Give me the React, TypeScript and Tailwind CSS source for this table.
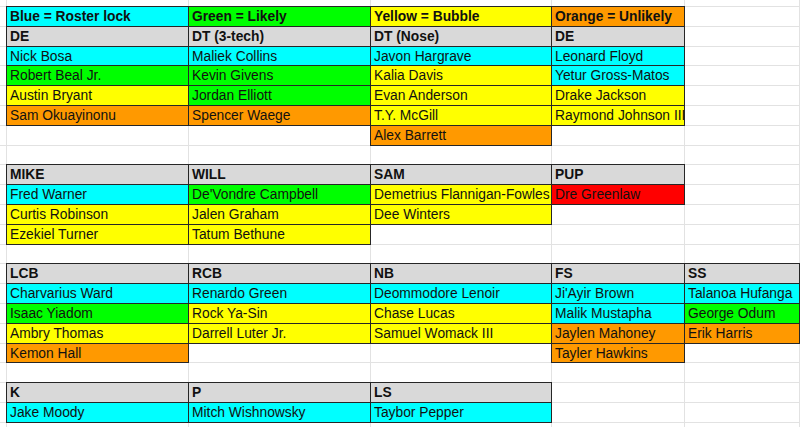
type Kind = "b" | "g" | "y" | "o" | "r" | "h" | "lb" | "lg" | "ly" | "lo";
type Cell = [string, Kind] | null;

const fills: Record<Kind, string> = {
  b: "bg-[#00ffff]",
  g: "bg-[#00ff00]",
  y: "bg-[#ffff00]",
  o: "bg-[#ff9900]",
  r: "bg-[#ff0000]",
  h: "bg-[#d9d9d9] font-bold",
  lb: "bg-[#00ffff] font-bold",
  lg: "bg-[#00ff00] font-bold",
  ly: "bg-[#ffff00] font-bold",
  lo: "bg-[#ff9900] font-bold",
};

// columns B..F, one entry per sheet row
const rows: Cell[][] = [
  [["Blue = Roster lock", "lb"], ["Green = Likely", "lg"], ["Yellow = Bubble", "ly"], ["Orange = Unlikely", "lo"], null],
  [["DE", "h"], ["DT (3-tech)", "h"], ["DT (Nose)", "h"], ["DE", "h"], null],
  [["Nick Bosa", "b"], ["Maliek Collins", "b"], ["Javon Hargrave", "b"], ["Leonard Floyd", "b"], null],
  [["Robert Beal Jr.", "g"], ["Kevin Givens", "g"], ["Kalia Davis", "y"], ["Yetur Gross-Matos", "b"], null],
  [["Austin Bryant", "y"], ["Jordan Elliott", "g"], ["Evan Anderson", "y"], ["Drake Jackson", "y"], null],
  [["Sam Okuayinonu", "o"], ["Spencer Waege", "o"], ["T.Y. McGill", "y"], ["Raymond Johnson III", "y"], null],
  [null, null, ["Alex Barrett", "o"], null, null],
  [null, null, null, null, null],
  [["MIKE", "h"], ["WILL", "h"], ["SAM", "h"], ["PUP", "h"], null],
  [["Fred Warner", "b"], ["De'Vondre Campbell", "g"], ["Demetrius Flannigan-Fowles", "y"], ["Dre Greenlaw", "r"], null],
  [["Curtis Robinson", "y"], ["Jalen Graham", "y"], ["Dee Winters", "y"], null, null],
  [["Ezekiel Turner", "y"], ["Tatum Bethune", "y"], null, null, null],
  [null, null, null, null, null],
  [["LCB", "h"], ["RCB", "h"], ["NB", "h"], ["FS", "h"], ["SS", "h"]],
  [["Charvarius Ward", "b"], ["Renardo Green", "b"], ["Deommodore Lenoir", "b"], ["Ji'Ayir Brown", "b"], ["Talanoa Hufanga", "b"]],
  [["Isaac Yiadom", "g"], ["Rock Ya-Sin", "y"], ["Chase Lucas", "y"], ["Malik Mustapha", "b"], ["George Odum", "g"]],
  [["Ambry Thomas", "y"], ["Darrell Luter Jr.", "y"], ["Samuel Womack III", "y"], ["Jaylen Mahoney", "o"], ["Erik Harris", "o"]],
  [["Kemon Hall", "o"], null, null, ["Tayler Hawkins", "o"], null],
  [null, null, null, null, null],
  [["K", "h"], ["P", "h"], ["LS", "h"], null, null],
  [["Jake Moody", "b"], ["Mitch Wishnowsky", "b"], ["Taybor Pepper", "b"], null, null],
  [null, null, null, null, null],
];

const SheetCell = ({ cell }: { cell: Cell }) => {
  if (!cell) return <div className="bg-white" />;
  const [text, kind] = cell;
  return (
    <div
      className={`${fills[kind]} flex items-center px-[3px] pt-px whitespace-nowrap text-[13.8px] leading-none text-[#111] outline outline-1 outline-offset-0 outline-[#262626]`}
    >
      {text}
    </div>
  );
};

export default function App() {
  return (
    <div className="w-[800px] h-[427px] overflow-hidden bg-white font-['Liberation_Sans',Arial,sans-serif]">
      <div className="grid grid-cols-[6px_181px_181px_180px_132px_114px] grid-rows-[6px] auto-rows-[18.8px] gap-px bg-[#e2e2e2]">
        {/* top partial row */}
        {Array.from({ length: 6 }).map((_, i) => (
          <div key={`t${i}`} className="bg-white" />
        ))}
        {rows.map((row, r) => (
          <div key={r} className="contents">
            <div className="bg-white" />
            {row.map((cell, c) => (
              <SheetCell key={c} cell={cell} />
            ))}
          </div>
        ))}
      </div>
    </div>
  );
}
